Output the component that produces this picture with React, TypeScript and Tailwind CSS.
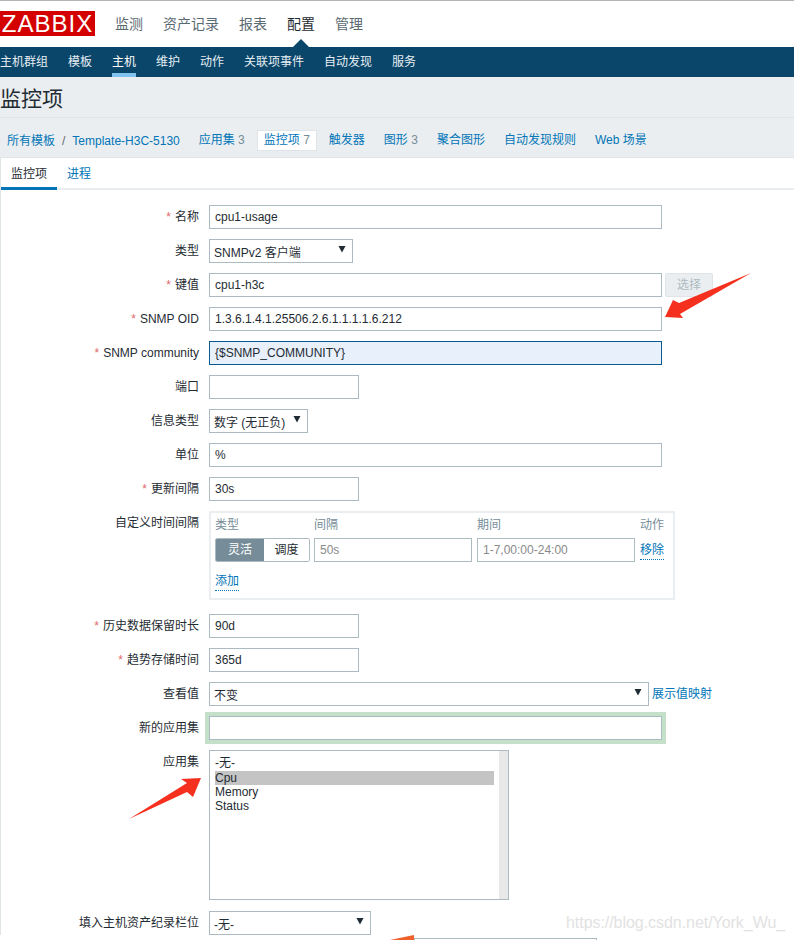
import React from "react";

const font = { fontFamily: '"Liberation Sans","Noto Sans CJK SC",sans-serif' };

function Caret() {
  return (
    <svg width="8" height="8" viewBox="0 0 8 8" className="shrink-0">
      <path d="M0.5 1H7.5L4 7.5Z" fill="#1f2c33" />
    </svg>
  );
}

function Row({ label, req, children, className = "" }: { label: string; req?: boolean; children: React.ReactNode; className?: string }) {
  return (
    <div className={"flex gap-[10px] " + className}>
      <div className="w-[199px] shrink-0 text-right text-[12px] leading-[24px] text-[#1f2c33] whitespace-nowrap">
        {req && <span className="text-[#e06a6a] mr-[4px]">*</span>}
        {label}
      </div>
      {children}
    </div>
  );
}

function Input({ value, w, className = "" }: { value: string; w: string; className?: string }) {
  return (
    <input
      readOnly
      value={value}
      className={"h-[24px] border border-[#acbbc2] bg-white px-[5px] text-[12px] text-[#1f2c33] outline-none " + w + " " + className}
    />
  );
}

function Select({ value, w }: { value: string; w: string }) {
  return (
    <div className={"h-[24px] border border-[#acbbc2] bg-white pl-[4px] pr-[6px] flex items-center justify-between text-[12px] text-[#1f2c33] " + w}>
      <span className="pt-[3px] whitespace-nowrap">{value}</span>
      <span className="mb-[4px]"><Caret /></span>
    </div>
  );
}

export default function App() {
  const tabs: [string, string?][] = [
    ["应用集", "3"],
    ["监控项", "7"],
    ["触发器"],
    ["图形", "3"],
    ["聚合图形"],
    ["自动发现规则"],
    ["Web 场景"],
  ];
  return (
    <div style={font} className="relative w-[794px] h-[940px] overflow-hidden bg-white">
      <div className="border-t border-[#b5b5b5] h-[47px] flex items-center relative">
        <div className="w-[95px] h-[25px] bg-[#d40000] text-white text-[24px] leading-[25px] text-center tracking-[1px] mb-[1px] shrink-0">ZABBIX</div>
        <div className="ml-[20px] flex gap-[20px] text-[14px] text-[#5a6a72] mt-[1px]">
          <span>监测</span>
          <span>资产记录</span>
          <span>报表</span>
          <span className="text-[#1f2c33]">配置</span>
          <span>管理</span>
        </div>
        <svg width="16" height="8" viewBox="0 0 16 8" className="absolute left-[293px] top-[38px]">
          <path d="M0 8L8 0L16 8Z" fill="#0a466a" />
        </svg>
      </div>

      <div className="h-[30px] bg-[#0a466a] flex gap-[20px] text-[12px] text-[#e6eef3]">
        {["主机群组", "模板", "主机", "维护", "动作", "关联项事件", "自动发现", "服务"].map((t) => (
          <span key={t} className={"h-[30px] leading-[30px] " + (t === "主机" ? "text-white border-b-[4px] border-[#7fc3ef]" : "")}>{t}</span>
        ))}
      </div>

      <div className="h-[41px] bg-[#ebeef0] border-b border-[#dfe4e7] text-[21px] leading-[43px] text-[#1f2c33]">监控项</div>

      <div className="h-[40px] bg-[#ebeef0] border-b border-[#dfe4e7] flex items-center pl-[7px] pt-[6px] text-[12px] text-[#0275b8]">
        <span>所有模板</span>
        <span className="mx-[7px] text-[#5a6a72]">/</span>
        <span>Template-H3C-5130</span>
        <div className="ml-[12px] flex gap-[5px]">
          {tabs.map(([t, n]) => (
            <span key={t} className={"h-[21px] leading-[19px] px-[6px] border whitespace-nowrap " + (t === "监控项" ? "bg-white border-[#dfe4e7] text-[#0275b8]" : "border-transparent")}>
              {t}
              {n && <span className="text-[#768d99]"> {n}</span>}
            </span>
          ))}
        </div>
      </div>

      <div className="border-l border-[#dfe4e7] bg-white">
        <div className="h-[32px] border-b-2 border-[#ebeef0] flex text-[12px]">
          <span className="w-[56px] h-[32px] text-center leading-[33px] text-[#1f2c33] border-b-[3px] border-[#0275b8]">监控项</span>
          <span className="ml-[10px] leading-[33px] text-[#0275b8]">进程</span>
        </div>

        <div className="pt-[15px] flex flex-col gap-[10px] -ml-px">
          <Row label="名称" req><Input value="cpu1-usage" w="w-[453px]" /></Row>
          <Row label="类型"><Select value="SNMPv2 客户端" w="w-[144px]" /></Row>
          <Row label="键值" req>
            <div className="flex gap-[3px]">
              <Input value="cpu1-h3c" w="w-[453px]" />
              <button className="w-[48px] h-[24px] border border-[#dfe4e7] bg-[#ebeef0] rounded-[2px] text-[12px] text-[#acbbc2]">选择</button>
            </div>
          </Row>
          <Row label="SNMP OID" req><Input value="1.3.6.1.4.1.25506.2.6.1.1.1.1.6.212" w="w-[453px]" /></Row>
          <Row label="SNMP community" req><Input value="{$SNMP_COMMUNITY}" w="w-[453px]" className="!bg-[#e8f0fb] !border-[#0a5a92]" /></Row>
          <Row label="端口"><Input value="" w="w-[150px]" /></Row>
          <Row label="信息类型"><Select value="数字 (无正负)" w="w-[99px]" /></Row>
          <Row label="单位"><Input value="%" w="w-[453px]" /></Row>
          <Row label="更新间隔" req><Input value="30s" w="w-[150px]" /></Row>

          <Row label="自定义时间间隔" className="mb-[4px]">
            <div className="w-[466px] h-[89px] border-2 border-[#ebeef0] pl-[4px] pt-[3px] text-[12px]">
              <div className="grid grid-cols-[94px_158px_158px_24px] gap-x-[5px] text-[#768d99]">
                <span className="h-[22px] leading-[18px]">类型</span>
                <span className="leading-[18px]">间隔</span>
                <span className="leading-[18px]">期间</span>
                <span className="leading-[18px] whitespace-nowrap">动作</span>
                <div className="flex h-[24px] w-[95px] border border-[#acbbc2] rounded-[2px] overflow-hidden">
                  <span className="w-[48px] bg-[#768d99] text-white text-center leading-[22px]">灵活</span>
                  <span className="flex-1 bg-white text-[#1f2c33] text-center leading-[22px]">调度</span>
                </div>
                <Input value="50s" w="w-[158px]" className="!text-[#8a8a8a]" />
                <Input value="1-7,00:00-24:00" w="w-[158px]" className="!text-[#8a8a8a]" />
                <span className="text-[#0275b8] leading-[17px] mt-[4px] h-[18px] border-b border-dotted border-[#0275b8] whitespace-nowrap">移除</span>
              </div>
              <span className="inline-block mt-[11px] text-[#0275b8] leading-[17px] border-b border-dotted border-[#0275b8]">添加</span>
            </div>
          </Row>

          <Row label="历史数据保留时长" req><Input value="90d" w="w-[150px]" /></Row>
          <Row label="趋势存储时间" req><Input value="365d" w="w-[150px]" /></Row>
          <Row label="查看值">
            <div className="flex gap-[3px] items-center">
              <Select value="不变" w="w-[440px]" />
              <span className="text-[12px] text-[#0275b8] whitespace-nowrap">展示值映射</span>
            </div>
          </Row>
          <Row label="新的应用集">
            <Input value="" w="w-[453px]" className="shadow-[0_0_0_4px_#c5e0c8] rounded-none" />
          </Row>
          <Row label="应用集" className="mb-[1px]">
            <div className="w-[300px] h-[150px] border border-[#acbbc2] flex text-[12px] text-[#1f2c33] leading-[14px]">
              <div className="flex-1 pl-[5px] pr-[5px] pt-[5px]">
                <div className="h-[15px]">-无-</div>
                <div className="bg-[#c4c4c4]">Cpu</div>
                <div>Memory</div>
                <div>Status</div>
              </div>
              <div className="w-[9px] bg-[#e8e8e8]" />
            </div>
          </Row>
          <Row label="填入主机资产纪录栏位"><Select value="-无-" w="w-[162px]" /></Row>
        </div>
      </div>

      {/* partly visible field at the bottom edge */}
      <div className="absolute left-[414px] top-[938px] w-[183px] h-[10px] border border-[#acbbc2]" />

      {/* annotation arrows */}
      <svg className="absolute left-0 top-0 pointer-events-none" width="794" height="940" viewBox="0 0 794 940">
        <path d="M751 273L679 303L673 300L665 317L683 318L680 314Z" fill="#f5301f" />
        <path d="M129 819L187 783L181 779L201 778L193 797L187 792Z" fill="#f5301f" />
        <path d="M390 940L414 935L414 940Z" fill="#f0602a" />
      </svg>

      <div className="absolute left-[566px] top-[913px] text-[16px] leading-[20px] tracking-[-0.05px] text-[#e2e2e2] whitespace-nowrap">https://blog.csdn.net/York_Wu_</div>
    </div>
  );
}
